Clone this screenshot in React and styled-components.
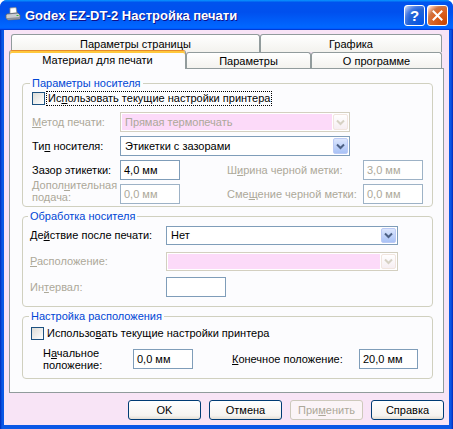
import React from 'react'
import styled, { createGlobalStyle } from 'styled-components'

const FONT = `"Liberation Sans", Arial, sans-serif`
const FACE = '#F8E4F6'
const GRAY = '#ACA899'

const GlobalStyle = createGlobalStyle`
	html, body { margin: 0; padding: 0; background: #fff; }
	body { font-family: ${FONT}; font-size: 11px; color: #000; }
	#root { width: 453px; height: 429px; }
`

const Window = styled.div`
	width: 453px;
	height: 429px;
	box-sizing: border-box;
	display: flex;
	flex-direction: column;
	background: linear-gradient(to right, #0029B8, #0A58E6 2px, #0A58E6 calc(100% - 2px), #0029B8);
	border-radius: 7px 7px 0 0;
	overflow: hidden;
`

const TitleBar = styled.div`
	flex: none;
	height: 30px;
	display: flex;
	align-items: center;
	padding: 0 5px;
	background: linear-gradient(180deg, #0997ff, #0053ee 8%, #0050ee 40%, #0066ff 88%, #0066ff 93%, #005bff 95%, #003dd7 96%, #003dd7);
	color: #fff;
`

const Caption = styled.div`
	margin-left: 4px;
	font: bold 13px ${FONT};
	text-shadow: 1px 1px #0F1089;
	white-space: nowrap;
`

const CaptionButtons = styled.div`
	margin-left: auto;
	display: flex;
	gap: 2px;
`

const CaptionButton = styled.div`
	width: 21px;
	height: 21px;
	box-sizing: border-box;
	border: 1px solid #fff;
	border-radius: 3px;
	display: flex;
	align-items: center;
	justify-content: center;
	color: #fff;
	font: bold 15px ${FONT};
	background: ${p => p.$close
		? 'radial-gradient(circle at 90% 90%, #CC4600 0%, #DC6527 55%, #CD7546 70%, #FFCCB2 90%, #fff 100%)'
		: 'radial-gradient(circle at 90% 90%, #0054E9 0%, #2263D5 55%, #4479E4 70%, #A3BBEC 90%, #fff 100%)'};
`

const Face = styled.div`
	flex: 1;
	margin: 0 4px 4px;
	background: ${FACE};
	display: flex;
	flex-direction: column;
	padding: 4px 5px 0;
`

const TabStrip = styled.div`
	height: 34px;
	display: flex;
	flex-direction: column;
`

const TabRow = styled.div`
	display: flex;
	height: ${p => p.$front ? 16 : 18}px;
	align-items: flex-end;
	padding-left: ${p => p.$front ? 0 : 2}px;
`

const Tab = styled.div`
	box-sizing: border-box;
	width: ${p => p.$w}px;
	height: ${p => p.$active ? 19 : p.$front ? 16 : 18}px;
	margin-bottom: ${p => p.$active ? -1 : 0}px;
	position: relative;
	z-index: ${p => p.$active ? 2 : 1};
	border: 1px solid #919B9C;
	border-bottom: none;
	border-top-color: ${p => p.$active ? '#E68B2C' : '#919B9C'};
	border-radius: 3px 3px 0 0;
	background: ${p => p.$active ? '#FCFCFE' : 'linear-gradient(#fff, #F3F2EE)'};
	box-shadow: ${p => p.$active ? 'inset 0 2px 0 #FFC83C' : 'none'};
	display: flex;
	align-items: center;
	justify-content: center;
	padding-top: ${p => p.$active ? 0 : 1}px;
	white-space: nowrap;
`

const Panel = styled.div`
	flex: none;
	height: 325px;
	box-sizing: border-box;
	border: 1px solid #919B9C;
	background: #FCFCFE;
	padding: 8px 10px 0 12px;
	display: flex;
	flex-direction: column;
	gap: 3px;
`

const Group = styled.fieldset`
	margin: 0;
	min-width: 0;
	border: 1px solid #D0D0BF;
	border-radius: 4px;
	padding: ${p => p.$pad};
`

const Legend = styled.legend`
	padding: 0 2px;
	margin-left: -2px;
	color: #0046D5;
	line-height: 13px;
`

const CheckRow = styled.div`
	display: flex;
	align-items: center;
	gap: 2px;
	height: 15px;
	margin-top: ${p => p.$top}px;
`

const CheckBox = styled.span`
	flex: none;
	width: 13px;
	height: 13px;
	box-sizing: border-box;
	border: 1px solid #1C5180;
	background: linear-gradient(135deg, #DCDCD7, #fff);
`

const CheckLabel = styled.span`
	padding: 0 1px;
	line-height: 13px;
	outline: ${p => p.$focus ? '1px dotted #000' : 'none'};
	white-space: nowrap;
`

const FieldGrid = styled.div`
	display: grid;
	grid-template-columns: ${p => p.$cols};
	grid-auto-rows: 20px;
	row-gap: ${p => p.$gap}px;
	margin-top: ${p => p.$top || 0}px;
	padding-left: ${p => p.$left || 0}px;
	align-items: center;
`

const Label = styled.div`
	color: ${p => p.$disabled ? GRAY : '#000'};
	white-space: nowrap;
	line-height: ${p => p.$two ? '12px' : 'normal'};
	margin-top: ${p => p.$two ? p.$shift : 0}px;
`

const Combo = styled.div`
	box-sizing: border-box;
	width: ${p => p.$w}px;
	height: ${p => p.$h || 20}px;
	border: 1px solid ${p => p.$disabled ? '#D3CFC0' : '#7F9DB9'};
	background: #fff;
	display: flex;
	padding: 1px;
	gap: 1px;
	grid-column: ${p => p.$span || 'auto'};
`

const ComboText = styled.div`
	flex: 1;
	display: flex;
	align-items: center;
	padding-left: 3px;
	background: ${p => p.$disabled ? '#FCDAF9' : '#fff'};
	color: ${p => p.$disabled ? GRAY : '#000'};
	white-space: nowrap;
	overflow: hidden;
`

const DropButton = styled.div`
	flex: none;
	width: 15px;
	box-sizing: border-box;
	border: 1px solid ${p => p.$disabled ? '#F1E5DF' : '#BBCAF5'};
	border-radius: 2px;
	background: ${p => p.$disabled
		? 'linear-gradient(#FFFFFF, #F6EEF2)'
		: 'linear-gradient(#DCE6FD, #C2D4FA 50%, #A9C2F6)'};
	display: flex;
	align-items: center;
	justify-content: center;
`

const TextBox = styled.div`
	box-sizing: border-box;
	width: ${p => p.$w || 60}px;
	height: 20px;
	border: 1px solid ${p => p.$disabled ? '#9DB2C6' : '#7F9DB9'};
	background: #fff;
	padding-left: 3px;
	display: flex;
	align-items: center;
	color: ${p => p.$disabled ? GRAY : '#000'};
`

const ButtonRow = styled.div`
	display: flex;
	justify-content: flex-end;
	gap: 8px;
	margin-top: 7px;
`

const Button = styled.div`
	box-sizing: border-box;
	width: 73px;
	height: 20px;
	border: 1px solid ${p => p.$disabled ? '#CDC9BC' : '#003C74'};
	border-radius: 3px;
	background: ${p => p.$disabled ? '#FBF4F7' : 'linear-gradient(180deg, #fff, #F6F4F0 80%, #E3DED4)'};
	color: ${p => p.$disabled ? GRAY : '#000'};
	display: flex;
	align-items: center;
	justify-content: center;
`

const Chevron = ({ disabled }) => (
	<svg width="9" height="7" viewBox="0 0 9 7">
		<path d="M1 1.5 L4.5 5 L8 1.5" fill="none" stroke={disabled ? '#D6D1C4' : '#4D6185'} strokeWidth="2" />
	</svg>
)

const PrinterIcon = () => (
	<svg width="16" height="16" viewBox="0 0 16 16">
		<path d="M5 1 L11 0.5 L12 6 L5 6.5 Z" fill="#fff" stroke="#8A8A8A" strokeWidth="0.8" />
		<path d="M2 7 L13 6 L15 8 L15 12 L3 13 L1 11 L1 8 Z" fill="#C9CCD2" stroke="#5E6470" strokeWidth="0.8" />
		<path d="M1 11 L3 13 L15 12 L15 10 L3 11 Z" fill="#8C929C" />
		<rect x="11.5" y="8" width="2" height="1" fill="#38B53A" />
	</svg>
)

const CloseGlyph = () => (
	<svg width="11" height="11" viewBox="0 0 11 11">
		<path d="M1.5 1.5 L9.5 9.5 M9.5 1.5 L1.5 9.5" stroke="#fff" strokeWidth="2" strokeLinecap="square" />
	</svg>
)

const ComboBox = ({ w, h, disabled, text, span }) => (
	<Combo $w={w} $h={h} $disabled={disabled} $span={span}>
		<ComboText $disabled={disabled}>{text}</ComboText>
		<DropButton $disabled={disabled}><Chevron disabled={disabled} /></DropButton>
	</Combo>
)

export default function App() {
	return (
		<>
			<GlobalStyle />
			<Window>
				<TitleBar>
					<PrinterIcon />
					<Caption>Godex EZ-DT-2 Настройка печати</Caption>
					<CaptionButtons>
						<CaptionButton>?</CaptionButton>
						<CaptionButton $close><CloseGlyph /></CaptionButton>
					</CaptionButtons>
				</TitleBar>
				<Face>
					<TabStrip>
						<TabRow>
							<Tab $w={249}>Параметры страницы</Tab>
							<Tab $w={182}>Графика</Tab>
						</TabRow>
						<TabRow $front>
							<Tab $w={177} $active>Материал для печати</Tab>
							<Tab $w={125} $front>Параметры</Tab>
							<Tab $w={131} $front>О программе</Tab>
						</TabRow>
					</TabStrip>
					<Panel>
						<Group $pad="0 8px 2px 9px">
							<Legend>Параметры носителя</Legend>
							<CheckRow $top={1}>
								<CheckBox />
								<CheckLabel $focus>Ис<u>п</u>ользовать текущие настройки принтера</CheckLabel>
							</CheckRow>
							<FieldGrid $cols="88px 60px 47px 136px 60px" $gap={4} $top={6}>
								<Label $disabled><u>М</u>етод печати:</Label>
								<ComboBox w={230} disabled text="Прямая термопечать" span="2 / 6" />
								<Label>Ти<u>п</u> носителя:</Label>
								<ComboBox w={230} text="Этикетки с зазорами" span="2 / 6" />
								<Label>Зазор этикетки:</Label>
								<TextBox>4,0 мм</TextBox>
								<span />
								<Label $disabled>Ш<u>и</u>рина черной метки:</Label>
								<TextBox $disabled>3,0 мм</TextBox>
								<Label $disabled $two $shift={-6}>Допол<u>н</u>ительная<br />подача:</Label>
								<TextBox $disabled>0,0 мм</TextBox>
								<span />
								<Label $disabled>Сме<u>щ</u>ение черной метки:</Label>
								<TextBox $disabled>0,0 мм</TextBox>
							</FieldGrid>
						</Group>
						<Group $pad="2px 8px 9px 7px">
							<Legend>Обработка носителя</Legend>
							<FieldGrid $cols="136px 1fr" $gap={6}>
								<Label>Де<u>й</u>ствие после печати:</Label>
								<ComboBox w={232} h={19} text="Нет" />
								<Label $disabled><u>Р</u>асположение:</Label>
								<ComboBox w={232} h={19} disabled text="" />
								<Label $disabled>Ин<u>т</u>ервал:</Label>
								<TextBox />
							</FieldGrid>
						</Group>
						<Group $pad="0 8px 9px 8px">
							<Legend>Настройка расположения</Legend>
							<CheckRow $top={3}>
								<CheckBox />
								<CheckLabel>Использо<u>в</u>ать текущие настройки принтера</CheckLabel>
							</CheckRow>
							<FieldGrid $cols="90px 60px 39px 127px 59px" $gap={0} $top={8} $left={12}>
								<Label $two $shift={0}>Н<u>а</u>чальное<br />положение:</Label>
								<TextBox>0,0 мм</TextBox>
								<span />
								<Label><u>К</u>онечное положение:</Label>
								<TextBox $w={59}>20,0 мм</TextBox>
							</FieldGrid>
						</Group>
					</Panel>
					<ButtonRow>
						<Button>OK</Button>
						<Button>Отмена</Button>
						<Button $disabled>При<u>м</u>енить</Button>
						<Button>Справка</Button>
					</ButtonRow>
				</Face>
			</Window>
		</>
	)
}
